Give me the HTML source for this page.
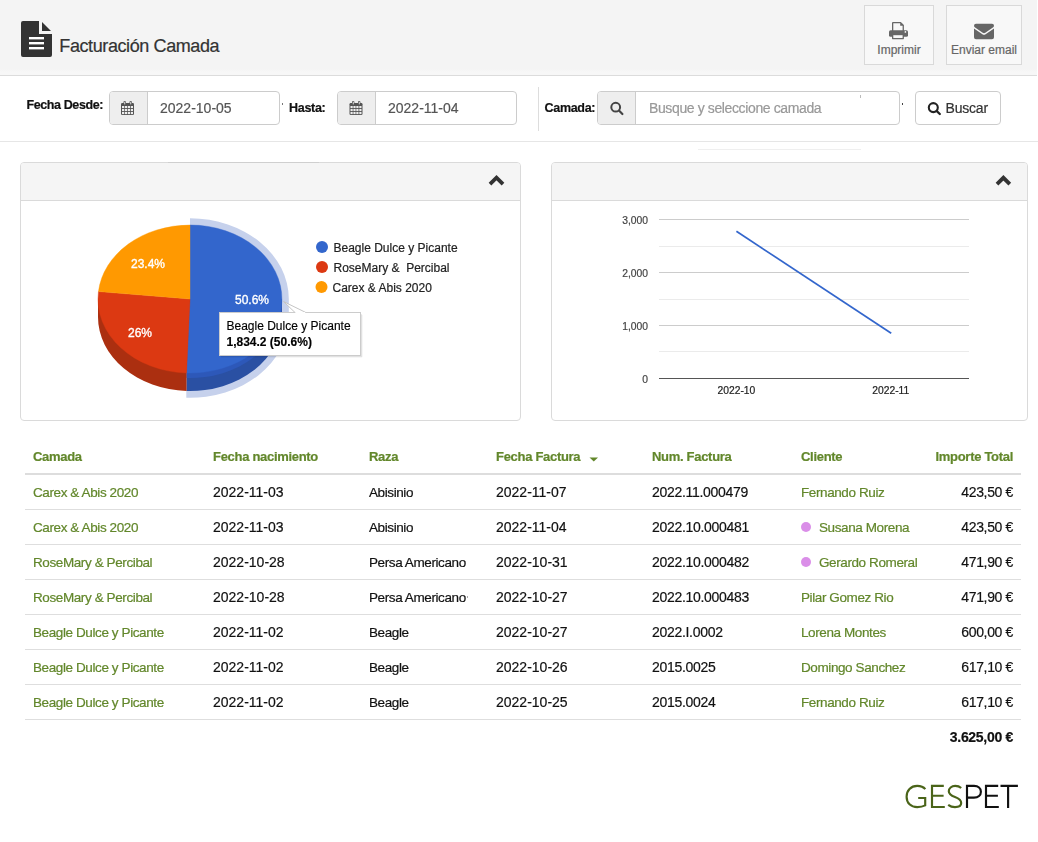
<!DOCTYPE html>
<html><head><meta charset="utf-8">
<style>
*{box-sizing:border-box;margin:0;padding:0}
html,body{width:1038px;height:842px;overflow:hidden;background:#fff;font-family:"Liberation Sans",sans-serif;color:#222}
.abs{position:absolute}
#wrap div{-webkit-text-stroke:0.2px currentColor}
#hdr{left:0;top:0;width:1037px;height:76px;background:linear-gradient(#f4f4f4 0,#f4f4f4 69px,#f7f7f7 72px,#f7f7f7 75px);border-bottom:1px solid #dcdcdc}
.title{left:59.3px;top:36.8px;font-size:18px;color:#333;white-space:nowrap;line-height:18px;letter-spacing:-0.4px}
.hbtn{top:5px;height:60px;border:1px solid #d9d9d9;background:#f8f8f8;color:#666;font-size:12px;text-align:center}
.hbtn span{position:absolute;left:0;right:0;top:38.3px;line-height:12px;white-space:nowrap}
.lbl{font-size:12.5px;font-weight:bold;color:#111;white-space:nowrap;line-height:12.5px;letter-spacing:-0.3px}
.ig{top:91px;height:34px;border:1px solid #ccc;border-radius:4px;background:#fff;overflow:hidden}
.ig .ad{position:absolute;left:0;top:0;bottom:0;width:38px;background:#eee;border-right:1px solid #ccc}
.ig .tx{position:absolute;top:9.15px;font-size:14px;color:#555;line-height:14px;white-space:nowrap}
.panel{top:162px;height:259px;border:1px solid #dadada;border-radius:4px;overflow:hidden;background:#fff}
.panel .ph{position:absolute;left:0;right:0;top:0;height:38px;background:#f5f5f5;border-bottom:1px solid #dadada}
.th{font-size:13px;font-weight:bold;color:#62872b;white-space:nowrap;line-height:13px;letter-spacing:-0.3px;top:449.7px}
.td{font-size:14px;color:#111;white-space:nowrap;line-height:14px}
.lt{letter-spacing:-0.4px;font-size:13.5px;margin-top:0.8px}
.g{color:#62872b}
.hl{left:25px;width:996px;height:1px;background:#dedede}
.dot{left:801px;width:10.4px;height:10.4px;border-radius:50%;background:#da8ee8}
svg text{font-family:"Liberation Sans",sans-serif}
</style></head><body><div id="wrap" style="position:absolute;left:0;top:0;width:1038px;height:842px;will-change:opacity;opacity:0.999">
<div id="hdr" class="abs"></div>
<!-- doc icon -->
<svg class="abs" style="left:21px;top:21px" width="31" height="36" viewBox="0 0 31 36">
<path d="M2 0H18V13H31V34Q31 36 29 36H2Q0 36 0 34V2Q0 0 2 0Z" fill="#333"/>
<path d="M21 1L30 10H21Z" fill="#333"/>
<rect x="8" y="16" width="15" height="2.4" fill="#fff"/>
<rect x="8" y="21" width="15" height="2.4" fill="#fff"/>
<rect x="8" y="26" width="15" height="2.4" fill="#fff"/>
</svg>
<div class="abs title">Facturación Camada</div>

<div class="abs hbtn" style="left:864px;width:70px">
<svg class="abs" style="left:24px;top:16px" width="20" height="18" viewBox="0 0 20 18">
<path d="M3,9.5 V1 Q3,0 4,0 H11.8 L14.9,3.1 V9.5 Z" fill="#666"/>
<path d="M4.3,9.5 V1.3 H11.2 V3.8 H13.6 V9.5 Z" fill="#f8f8f8"/>
<rect x="0" y="8.2" width="19" height="6.6" rx="1.6" fill="#666"/>
<rect x="3" y="12" width="11.9" height="5.2" rx="0.6" fill="#666"/>
<rect x="4.3" y="13.2" width="9.3" height="2.8" fill="#f8f8f8"/>
<circle cx="16.4" cy="9.9" r="0.85" fill="#f8f8f8"/>
</svg>
<span>Imprimir</span></div>
<div class="abs hbtn" style="left:946px;width:76px">
<svg class="abs" style="left:27px;top:17px" width="21" height="17" viewBox="0 0 21 17">
<path d="M0,2.7 Q0,0.7 2,0.7 H18 Q20,0.7 20,2.7 Q20,3.9 18.9,4.6 L11.3,9.8 Q10,10.6 8.7,9.8 L1.1,4.6 Q0,3.9 0,2.7 Z" fill="#666"/>
<path d="M0,5.6 L8.4,11.3 Q10,12.3 11.6,11.3 L20,5.6 V14.3 Q20,16.3 18,16.3 H2 Q0,16.3 0,14.3 Z" fill="#666"/>
</svg>
<span>Enviar email</span></div>

<!-- filters -->
<div class="abs lbl" style="left:26.5px;top:99.2px;letter-spacing:-0.4px">Fecha Desde:</div>
<div class="abs ig" style="left:109px;width:171px"><div class="ad"></div><div class="tx" style="left:50px">2022-10-05</div></div>
<div class="abs lbl" style="left:289px;top:101.9px">Hasta:</div>
<div class="abs ig" style="left:337px;width:180px"><div class="ad"></div><div class="tx" style="left:50px">2022-11-04</div></div>
<div class="abs" style="left:538px;top:87px;width:1px;height:44px;background:#ddd"></div>
<div class="abs lbl" style="left:544.5px;top:102.3px">Camada:</div>
<div class="abs ig" style="left:597px;width:303px"><div class="ad"></div><div class="tx" style="left:51px;color:#999;letter-spacing:-0.38px">Busque y seleccione camada</div></div>
<div class="abs ig" style="left:915px;width:86px;top:91px"><div class="tx" style="left:29.5px;color:#333;letter-spacing:-0.2px">Buscar</div></div>
<div class="abs" style="left:0;top:141px;width:1038px;height:1px;background:#e6e6e6"></div>

<div class="abs" style="left:282px;top:103px;width:1px;height:2px;background:#777"></div>
<div class="abs" style="left:902px;top:103px;width:1px;height:2px;background:#444"></div>
<div class="abs" style="left:860px;top:95px;width:1px;height:3px;background:#bbb"></div>
<div class="abs" style="left:467px;top:596px;width:1px;height:2px;background:#aaa"></div>
<!-- panels -->
<div class="abs panel" style="left:20px;width:501px"><div class="ph"></div></div>
<div class="abs panel" style="left:551px;width:477px"><div class="ph"></div></div>

<div class="abs" style="left:168px;top:162px;width:151px;height:1px;background:#cfcfcf"></div>
<div class="abs" style="left:698px;top:149px;width:163px;height:1px;background:#efefef"></div>
<svg class="abs" style="left:0;top:0" width="1038" height="842" viewBox="0 0 1038 842">
<!-- chevrons -->
<polyline points="490,184.2 496.5,177.7 503,184.2" fill="none" stroke="#333" stroke-width="3.8"/>
<polyline points="997,184.2 1003.4,177.8 1009.8,184.2" fill="none" stroke="#333" stroke-width="3.8"/>
<!-- icons in inputs -->
<g id="cal" fill="#555">
<rect x="121" y="103" width="13" height="12" rx="1.2"/>
<rect x="123.5" y="100.9" width="2.4" height="4.2" rx="1"/>
<rect x="129.5" y="100.9" width="2.4" height="4.2" rx="1"/>
</g>
<g fill="#eee">
<rect x="122" y="106" width="2.2" height="2.1"/><rect x="124.9" y="106" width="2.2" height="2.1"/><rect x="127.8" y="106" width="2.2" height="2.1"/><rect x="130.8" y="106" width="2.2" height="2.1"/>
<rect x="122" y="109" width="2.2" height="2.1"/><rect x="124.9" y="109" width="2.2" height="2.1"/><rect x="127.8" y="109" width="2.2" height="2.1"/><rect x="130.8" y="109" width="2.2" height="2.1"/>
<rect x="122" y="112" width="2.2" height="2.1"/><rect x="124.9" y="112" width="2.2" height="2.1"/><rect x="127.8" y="112" width="2.2" height="2.1"/><rect x="130.8" y="112" width="2.2" height="2.1"/>
<rect x="124.3" y="101.8" width="0.9" height="2.6"/><rect x="130.3" y="101.8" width="0.9" height="2.6"/>
</g>
<use href="#cal" x="228.5"/>
<g fill="#eee" transform="translate(228.5,0)">
<rect x="122" y="106" width="2.2" height="2.1"/><rect x="124.9" y="106" width="2.2" height="2.1"/><rect x="127.8" y="106" width="2.2" height="2.1"/><rect x="130.8" y="106" width="2.2" height="2.1"/>
<rect x="122" y="109" width="2.2" height="2.1"/><rect x="124.9" y="109" width="2.2" height="2.1"/><rect x="127.8" y="109" width="2.2" height="2.1"/><rect x="130.8" y="109" width="2.2" height="2.1"/>
<rect x="122" y="112" width="2.2" height="2.1"/><rect x="124.9" y="112" width="2.2" height="2.1"/><rect x="127.8" y="112" width="2.2" height="2.1"/><rect x="130.8" y="112" width="2.2" height="2.1"/>
<rect x="124.3" y="101.8" width="0.9" height="2.6"/><rect x="130.3" y="101.8" width="0.9" height="2.6"/>
</g>
<g fill="none" stroke="#444" stroke-width="2" stroke-linecap="round">
<circle cx="615.7" cy="107.2" r="4.4"/><line x1="619.2" y1="110.8" x2="622.4" y2="114" stroke-width="2.2"/>
</g>
<g fill="none" stroke="#222" stroke-width="2.1" stroke-linecap="round">
<circle cx="933.3" cy="107.6" r="4.5"/><line x1="936.8" y1="111.2" x2="939.8" y2="114" stroke-width="2.3"/>
</g>
<!-- pie -->
<path d="M190,218.3 A98.8,80.7 0 0 1 288.8,299 V317 A98.8,80.7 0 0 1 186.3,397.7 V373 L190,299 Z" fill="#c6d1ec"/>
<path d="M190,299 L282,299 V317 A92,74 0 0 1 186.53,390.95 V372.95 Z" fill="#2a50a3"/>
<path d="M190,299 L282,299 V304 A92,74 0 0 1 186.53,377.95 V372.95 Z" fill="#2d58b9"/>
<path d="M190,299 L98,299 V317 A92,74 0 0 0 186.53,390.95 V372.95 Z" fill="#ab2f10"/>
<path d="M190,299 L190,225 A92,74 0 1 1 186.53,372.95 Z" fill="#3366cc" stroke="#3366cc" stroke-width="0.4"/>
<path d="M190,299 L186.53,372.95 A92,74 0 0 1 98.46,291.58 Z" fill="#dc3912" stroke="#dc3912" stroke-width="0.4"/>
<path d="M190,299 L98.46,291.58 A92,74 0 0 1 190,225 Z" fill="#ff9900" stroke="#ff9900" stroke-width="0.4"/>
<g font-size="12" fill="#fff" stroke="#fff" stroke-width="0.35" text-anchor="middle">
<text x="148" y="268">23.4%</text>
<text x="140" y="337">26%</text>
<text x="252" y="304">50.6%</text>
</g>
<!-- legend -->
<circle cx="322" cy="247" r="6" fill="#3366cc"/>
<circle cx="322" cy="267" r="6" fill="#dc3912"/>
<circle cx="321.5" cy="287" r="6" fill="#ff9900"/>
<g font-size="12" fill="#222" stroke="#222" stroke-width="0.2">
<text x="333.5" y="252">Beagle Dulce y Picante</text>
<text x="333.5" y="272">RoseMary &amp;&#160; Percibal</text>
<text x="332.5" y="292">Carex &amp; Abis 2020</text>
</g>
<!-- tooltip -->
<rect x="220.5" y="314.5" width="142" height="43" fill="#000" opacity="0.07" rx="1"/>
<rect x="221" y="314" width="141" height="43" fill="#000" opacity="0.05"/>
<rect x="219.5" y="312.5" width="141" height="43" fill="#fff" stroke="#ccc" stroke-width="1"/>
<path d="M295,312.5 L283.5,301.5 L305.8,312.5" fill="#fff" fill-opacity="0.85" stroke="#c4c4c4" stroke-width="1"/>
<rect x="295.6" y="312" width="9.6" height="1.5" fill="#fff"/>
<g font-size="12" fill="#000" stroke="#000" stroke-width="0.15">
<text x="226.5" y="330">Beagle Dulce y Picante</text>
<text x="226.5" y="345.5" font-weight="bold">1,834.2 (50.6%)</text>
</g>
<!-- line chart -->
<g shape-rendering="crispEdges">
<rect x="659" y="246" width="310" height="1" fill="#ebebeb"/>
<rect x="659" y="299" width="310" height="1" fill="#ebebeb"/>
<rect x="659" y="351" width="310" height="1" fill="#ebebeb"/>
<rect x="659" y="219" width="310" height="1" fill="#cccccc"/>
<rect x="659" y="272" width="310" height="1" fill="#cccccc"/>
<rect x="659" y="325" width="310" height="1" fill="#cccccc"/>
<rect x="659" y="378" width="310" height="1" fill="#555555"/>
</g>
<g font-size="10.3" fill="#444" stroke="#444" stroke-width="0.2" text-anchor="end">
<text x="648" y="224">3,000</text>
<text x="648" y="277">2,000</text>
<text x="648" y="330">1,000</text>
<text x="648" y="383">0</text>
</g>
<g font-size="10.3" fill="#222" stroke="#222" stroke-width="0.2" text-anchor="middle">
<text x="736.4" y="394">2022-10</text>
<text x="890.8" y="394">2022-11</text>
</g>
<line x1="736.4" y1="231.3" x2="891.2" y2="333.2" stroke="#3366cc" stroke-width="1.7"/>
<!-- caret -->
<path d="M589.5,457.5 H598 L593.75,461.5 Z" fill="#62872b"/>
</svg>

<!-- table -->
<div class="abs th" style="left:33px">Camada</div>
<div class="abs th" style="left:213px">Fecha nacimiento</div>
<div class="abs th" style="left:369px">Raza</div>
<div class="abs th" style="left:496px">Fecha Factura</div>
<div class="abs th" style="left:652px">Num. Factura</div>
<div class="abs th" style="left:801px">Cliente</div>
<div class="abs th" style="right:25px">Importe Total</div>
<div class="abs" style="left:25px;top:473px;width:996px;height:2px;background:#ddd"></div>
<div class="abs td g lt" style="left:33px;top:485.15px">Carex &amp; Abis 2020</div>
<div class="abs td" style="left:213px;top:485.15px">2022-11-03</div>
<div class="abs td lt" style="left:369px;top:485.15px">Abisinio</div>
<div class="abs td" style="left:496px;top:485.15px">2022-11-07</div>
<div class="abs td" style="left:652px;top:485.15px;letter-spacing:-0.3px">2022.11.000479</div>
<div class="abs td g lt" style="left:801px;top:485.15px">Fernando Ruiz</div>
<div class="abs td" style="right:25px;top:485.15px;letter-spacing:-0.35px">423,50 €</div>
<div class="abs hl" style="top:509px"></div>
<div class="abs td g lt" style="left:33px;top:520.15px">Carex &amp; Abis 2020</div>
<div class="abs td" style="left:213px;top:520.15px">2022-11-03</div>
<div class="abs td lt" style="left:369px;top:520.15px">Abisinio</div>
<div class="abs td" style="left:496px;top:520.15px">2022-11-04</div>
<div class="abs td" style="left:652px;top:520.15px;letter-spacing:-0.3px">2022.10.000481</div>
<div class="abs dot" style="top:522px"></div><div class="abs td g lt" style="left:819px;top:520.15px">Susana Morena</div>
<div class="abs td" style="right:25px;top:520.15px;letter-spacing:-0.35px">423,50 €</div>
<div class="abs hl" style="top:544px"></div>
<div class="abs td g lt" style="left:33px;top:555.15px">RoseMary &amp; Percibal</div>
<div class="abs td" style="left:213px;top:555.15px">2022-10-28</div>
<div class="abs td lt" style="left:369px;top:555.15px">Persa Americano</div>
<div class="abs td" style="left:496px;top:555.15px">2022-10-31</div>
<div class="abs td" style="left:652px;top:555.15px;letter-spacing:-0.3px">2022.10.000482</div>
<div class="abs dot" style="top:557px"></div><div class="abs td g lt" style="left:819px;top:555.15px">Gerardo Romeral</div>
<div class="abs td" style="right:25px;top:555.15px;letter-spacing:-0.35px">471,90 €</div>
<div class="abs hl" style="top:579px"></div>
<div class="abs td g lt" style="left:33px;top:590.15px">RoseMary &amp; Percibal</div>
<div class="abs td" style="left:213px;top:590.15px">2022-10-28</div>
<div class="abs td lt" style="left:369px;top:590.15px">Persa Americano</div>
<div class="abs td" style="left:496px;top:590.15px">2022-10-27</div>
<div class="abs td" style="left:652px;top:590.15px;letter-spacing:-0.3px">2022.10.000483</div>
<div class="abs td g lt" style="left:801px;top:590.15px">Pilar Gomez Rio</div>
<div class="abs td" style="right:25px;top:590.15px;letter-spacing:-0.35px">471,90 €</div>
<div class="abs hl" style="top:614px"></div>
<div class="abs td g lt" style="left:33px;top:625.15px">Beagle Dulce y Picante</div>
<div class="abs td" style="left:213px;top:625.15px">2022-11-02</div>
<div class="abs td lt" style="left:369px;top:625.15px">Beagle</div>
<div class="abs td" style="left:496px;top:625.15px">2022-10-27</div>
<div class="abs td" style="left:652px;top:625.15px;letter-spacing:-0.3px">2022.I.0002</div>
<div class="abs td g lt" style="left:801px;top:625.15px">Lorena Montes</div>
<div class="abs td" style="right:25px;top:625.15px;letter-spacing:-0.35px">600,00 €</div>
<div class="abs hl" style="top:649px"></div>
<div class="abs td g lt" style="left:33px;top:660.15px">Beagle Dulce y Picante</div>
<div class="abs td" style="left:213px;top:660.15px">2022-11-02</div>
<div class="abs td lt" style="left:369px;top:660.15px">Beagle</div>
<div class="abs td" style="left:496px;top:660.15px">2022-10-26</div>
<div class="abs td" style="left:652px;top:660.15px;letter-spacing:-0.3px">2015.0025</div>
<div class="abs td g lt" style="left:801px;top:660.15px">Domingo Sanchez</div>
<div class="abs td" style="right:25px;top:660.15px;letter-spacing:-0.35px">617,10 €</div>
<div class="abs hl" style="top:684px"></div>
<div class="abs td g lt" style="left:33px;top:695.15px">Beagle Dulce y Picante</div>
<div class="abs td" style="left:213px;top:695.15px">2022-11-02</div>
<div class="abs td lt" style="left:369px;top:695.15px">Beagle</div>
<div class="abs td" style="left:496px;top:695.15px">2022-10-25</div>
<div class="abs td" style="left:652px;top:695.15px;letter-spacing:-0.3px">2015.0024</div>
<div class="abs td g lt" style="left:801px;top:695.15px">Fernando Ruiz</div>
<div class="abs td" style="right:25px;top:695.15px;letter-spacing:-0.35px">617,10 €</div>
<div class="abs hl" style="top:719px"></div>
<div class="abs td" style="right:25px;top:730.15px;font-weight:bold;letter-spacing:-0.3px">3.625,00 €</div>

<svg class="abs" style="left:0;top:0" width="1038" height="842" viewBox="0 0 1038 842" fill="none" stroke-width="2.15">
<g stroke="#4a6419">
<path d="M925.3,789.2 C923.4,786.8 920.6,785.9 917.2,785.9 C910.8,785.9 906.6,790.6 906.6,796.7 C906.6,803 910.8,807.1 917.3,807.1 C920.5,807.1 923.3,806.4 925.2,805.4 V798 H918.2"/>
<path d="M943.8,785.9 H932 V807 H944.8 M932,795.7 H943.6"/>
<path d="M961.2,788 C959.5,786.5 957.5,785.9 955.2,785.9 C951.5,785.9 948.8,788.3 948.8,791.2 C948.8,794.5 951.5,795.7 955,797 C958.8,798.4 961.2,800 961.2,803 C961.2,805.8 958.5,807.1 955,807.1 C952.3,807.1 950,806.2 948.2,804.8"/>
</g>
<g stroke="#111">
<path d="M967,808 V785.9 H974 C978.3,785.9 980.9,788.3 980.9,791.7 C980.9,795.2 978.3,797.6 974,797.6 H967"/>
<path d="M998.2,785.9 H986 V807 H998.8 M986,795.7 H997.9"/>
<path d="M1000.5,785.8 H1017.9 M1008.1,785.8 V808"/>
</g>
</svg>
</div></body></html>
